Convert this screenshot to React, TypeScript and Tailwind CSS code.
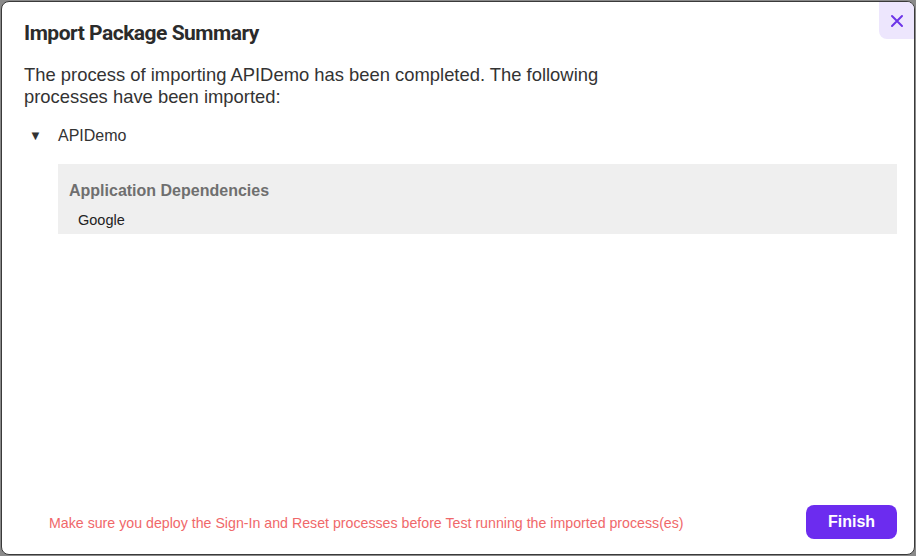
import React from "react";

export default function App() {
  return (
    <div className="w-[916px] h-[556px] bg-[#8a8a8a] p-px" style={{ fontFamily: '"Liberation Sans", Arial, sans-serif' }}>
      <div className="relative w-full h-full bg-white rounded-[8px] border border-[#3a3a3a] flex flex-col overflow-hidden">
        <button className="absolute top-0 right-0 w-[35px] h-[37px] bg-[#ede6fd] rounded-bl-[8px] flex items-center justify-center">
          <svg width="14" height="14" viewBox="0 0 14 14" fill="none" stroke="#6d35e8" strokeWidth="2" strokeLinecap="round">
            <path d="M2 2L12 12M12 2L2 12" />
          </svg>
        </button>
        <h1 className="pl-[22px] pt-[17px] text-[21px] leading-[28px] font-bold text-[#2b2b2b] tracking-[-0.5px]" style={{ fontFamily: 'Roboto, "Liberation Sans", sans-serif' }}>
          Import Package Summary
        </h1>
        <p className="pl-[22px] pt-[17px] w-[640px] text-[18.4px] leading-[22px] text-[#333]">
          The process of importing APIDemo has been completed. The following processes have been imported:
        </p>
        <div className="flex items-center pl-[27px] pt-[17px] text-[16px] leading-[22px] text-[#333]">
          <span className="text-[13px] w-[29px]">▼</span>
          <span>APIDemo</span>
        </div>
        <div className="ml-[56px] mr-[17px] mt-[17px] h-[70px] bg-[#efefef] pl-[11px] pt-[17px]">
          <div className="text-[16px] leading-[20px] font-bold text-[#6f6f6f]">Application Dependencies</div>
          <div className="pl-[9px] pt-[10px] text-[14.5px] leading-[18px] text-[#222]">Google</div>
        </div>
        <div className="mt-auto flex items-center justify-between pl-[47px] pr-[17px] pb-[15px]">
          <span className="text-[14.2px] text-[#f0686a] pt-[3px]">
            Make sure you deploy the Sign-In and Reset processes before Test running the imported process(es)
          </span>
          <button className="w-[91px] h-[34px] bg-[#6c2cef] rounded-[8px] text-white font-bold text-[16px]">Finish</button>
        </div>
      </div>
    </div>
  );
}
